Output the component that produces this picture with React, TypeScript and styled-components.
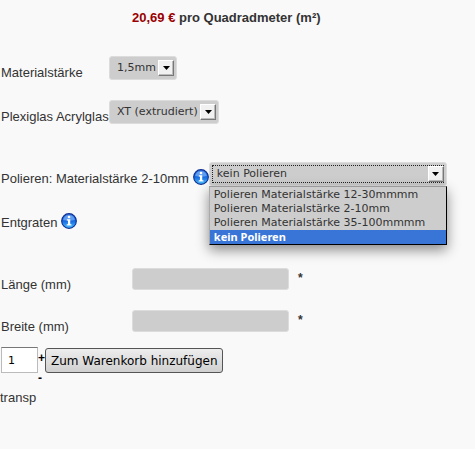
import React, { useState } from "react";
import styled, { createGlobalStyle } from "styled-components";

const GlobalStyle = createGlobalStyle`
  * { box-sizing: border-box; }
  body {
    margin: 0;
    background: #f9f9f9;
    color: #333;
    font: 13px/16px "Liberation Sans", Arial, sans-serif;
  }
`;

const Form = styled.form`
  display: flex;
  flex-direction: column;
`;

const Price = styled.p`
  margin: 0;
  padding: 10px 0 30px 132px;
  font-weight: bold;
`;

const Amount = styled.span`
  color: #990000;
`;

const OptionRow = styled.div<{ $spaced?: boolean }>`
  display: flex;
  align-items: flex-start;
  height: 44px;
  margin-top: ${(p) => (p.$spaced ? "18px" : "0")};
`;

const OptionLabel = styled.label<{ $column?: boolean }>`
  flex: none;
  min-width: ${(p) => (p.$column ? "109px" : "0")};
  padding: 9px 0 0 1px;
  white-space: nowrap;
`;

const InfoButton = styled.button`
  flex: none;
  width: 16px;
  height: 16px;
  margin: 7px 0 0 4px;
  padding: 0;
  border: 0;
  background: none;

  svg { display: block; }
`;

const SelectBox = styled.div<{ $wide?: boolean }>`
  position: relative;
  flex: none;
  display: flex;
  width: ${(p) => (p.$wide ? "238px" : "auto")};
`;

const Select = styled.select<{ $open?: boolean }>`
  appearance: none;
  width: 100%;
  height: 24px;
  padding: 0 20px 0 7px;
  border: 1px solid #dcdcdc;
  border-radius: 3px;
  background: #cdcdcd;
  color: #333;
  font: 11px/14px "DejaVu Sans", sans-serif;
  outline: ${(p) => (p.$open ? "1px dotted #222" : "none")};
  outline-offset: -4px;
`;

const Arrow = styled.span`
  position: absolute;
  top: 4px;
  right: 3px;
  display: flex;
  align-items: center;
  justify-content: center;
  width: 16px;
  height: 16px;
  border: 1px solid;
  border-color: #fff #777 #777 #fff;
  background: #f1f1f1;
  box-shadow: inset -1px -1px #bbb;
  pointer-events: none;
`;

const Menu = styled.ul`
  position: absolute;
  top: 24px;
  left: 0;
  width: 100%;
  margin: 0;
  padding: 1px 0 0;
  list-style: none;
  border: 1px solid;
  border-color: #999 #000 #000 #aaa;
  background: #cdcdcd;
  box-shadow: 0 5px 12px rgba(0, 0, 0, 0.45);
  font: 11px/14px "DejaVu Sans", sans-serif;
`;

const MenuItem = styled.li<{ $active: boolean }>`
  height: 14px;
  padding: 0 4px;
  white-space: nowrap;
  background: ${(p) => (p.$active ? "#3875d7" : "transparent")};
  color: ${(p) => (p.$active ? "#fff" : "#333")};
  font-family: ${(p) => (p.$active ? '"Noto Sans", sans-serif' : "inherit")};
  font-weight: ${(p) => (p.$active ? "bold" : "normal")};
`;

const Fields = styled.div`
  display: flex;
  flex-direction: column;
  gap: 20px;
  margin-top: 18px;
`;

const FieldRow = styled.div`
  display: grid;
  grid-template-columns: 132px 157px auto;
  align-items: start;
`;

const FieldLabel = styled.label`
  height: 22px;
  padding: 9px 0 0 1px;
`;

const FieldInput = styled.input`
  width: 100%;
  height: 22px;
  padding: 0 6px;
  border: 1px solid #dcdcdc;
  border-radius: 3px;
  background: #cdcdcd;
  font: inherit;
`;

const Required = styled.span`
  padding: 2px 0 0 9px;
  font-weight: bold;
  font-size: 12px;
`;

const CartRow = styled.div`
  display: flex;
  align-items: flex-start;
  margin-top: 15px;
  padding-left: 1px;
`;

const Quantity = styled.input`
  width: 37px;
  height: 26px;
  padding: 0 6px;
  border: 1px solid #bbb;
  border-top-color: #777;
  background: #fff;
  color: #000;
  font: 11px/14px "DejaVu Sans", sans-serif;
`;

const Steps = styled.div`
  display: flex;
  flex-direction: column;
  gap: 4px;
  width: 7px;
  padding-top: 3px;
`;

const Step = styled.button`
  height: 16px;
  padding: 0;
  border: 0;
  background: none;
  color: #000;
  text-align: left;
  font: bold 12px/16px "Liberation Sans", Arial, sans-serif;
`;

const AddButton = styled.button`
  height: 25px;
  margin-top: 1px;
  padding: 0 4px 0 5px;
  border: 1px solid #555;
  border-radius: 3px;
  background: linear-gradient(#ededed, #d0d0d0);
  color: #000;
  white-space: nowrap;
  font: 12px/16px "DejaVu Sans", sans-serif;
`;

const Note = styled.p`
  margin: 4px 0 0;
`;

function InfoIcon({ id }: { id: string }) {
  return (
    <svg width="16" height="16" viewBox="0 0 17 17" aria-hidden="true">
      <defs>
        <linearGradient id={id} x1="0" y1="0" x2="0" y2="1">
          <stop offset="0" stopColor="#3a7be0" />
          <stop offset="0.5" stopColor="#1668e0" />
          <stop offset="1" stopColor="#4cc4ff" />
        </linearGradient>
      </defs>
      <circle cx="8.5" cy="8.5" r="7.8" fill={`url(#${id})`} stroke="#0c2f94" strokeWidth="1.2" />
      <path d="M2.3 7.5a6.3 6.3 0 0 1 12.4 0Q8.5 9 2.3 7.5Z" fill="#9ccbff" opacity="0.5" />
      <circle cx="8.5" cy="4.3" r="1.4" fill="#fff" />
      <path d="M6.2 6.7h3.6v5.2h1.3v1.3H6.1v-1.3h1.3V8H6.2Z" fill="#fff" />
    </svg>
  );
}

function ArrowMark() {
  return (
    <Arrow aria-hidden="true">
      <svg width="7" height="4" viewBox="0 0 7 4">
        <path d="M0 0h7L3.5 4Z" fill="#000" />
      </svg>
    </Arrow>
  );
}

const finishes = [
  "Polieren Materialstärke 12-30mmmm",
  "Polieren Materialstärke 2-10mm",
  "Polieren Materialstärke 35-100mmmm",
  "kein Polieren",
];

export default function App() {
  const [finish, setFinish] = useState("kein Polieren");
  const [quantity, setQuantity] = useState(1);

  return (
    <>
      <GlobalStyle />
      <Form onSubmit={(e) => e.preventDefault()}>
        <Price>
          <Amount>20,69 €</Amount> pro Quadradmeter (m²)
        </Price>
        <OptionRow>
          <OptionLabel $column htmlFor="thickness">Materialstärke</OptionLabel>
          <SelectBox>
            <Select id="thickness"><option>1,5mm</option></Select>
            <ArrowMark />
          </SelectBox>
        </OptionRow>
        <OptionRow>
          <OptionLabel $column htmlFor="material">Plexiglas Acrylglas</OptionLabel>
          <SelectBox>
            <Select id="material"><option>XT (extrudiert)</option></Select>
            <ArrowMark />
          </SelectBox>
        </OptionRow>
        <OptionRow $spaced>
          <OptionLabel htmlFor="finish">Polieren: Materialstärke 2-10mm</OptionLabel>
          <InfoButton type="button" aria-label="Info Polieren"><InfoIcon id="info-finish" /></InfoButton>
          <SelectBox $wide>
            <Select $open id="finish" value={finish} onChange={(e) => setFinish(e.target.value)}>
              {finishes.map((name) => <option key={name}>{name}</option>)}
            </Select>
            <ArrowMark />
            <Menu role="listbox" aria-label="Polieren">
              {finishes.map((name) => (
                <MenuItem
                  key={name}
                  role="option"
                  aria-selected={name === finish}
                  $active={name === finish}
                  onClick={() => setFinish(name)}
                >
                  {name}
                </MenuItem>
              ))}
            </Menu>
          </SelectBox>
        </OptionRow>
        <OptionRow>
          <OptionLabel as="span">Entgraten</OptionLabel>
          <InfoButton type="button" aria-label="Info Entgraten"><InfoIcon id="info-deburr" /></InfoButton>
        </OptionRow>
        <Fields>
          <FieldRow>
            <FieldLabel htmlFor="length">Länge (mm)</FieldLabel>
            <FieldInput id="length" required />
            <Required>*</Required>
          </FieldRow>
          <FieldRow>
            <FieldLabel htmlFor="width">Breite (mm)</FieldLabel>
            <FieldInput id="width" required />
            <Required>*</Required>
          </FieldRow>
        </Fields>
        <CartRow>
          <Quantity
            aria-label="Menge"
            value={quantity}
            onChange={(e) => setQuantity(Number(e.target.value) || 1)}
          />
          <Steps>
            <Step type="button" onClick={() => setQuantity(quantity + 1)}>+</Step>
            <Step type="button" onClick={() => setQuantity(Math.max(1, quantity - 1))}>-</Step>
          </Steps>
          <AddButton type="submit">Zum Warenkorb hinzufügen</AddButton>
        </CartRow>
        <Note>transp</Note>
      </Form>
    </>
  );
}
